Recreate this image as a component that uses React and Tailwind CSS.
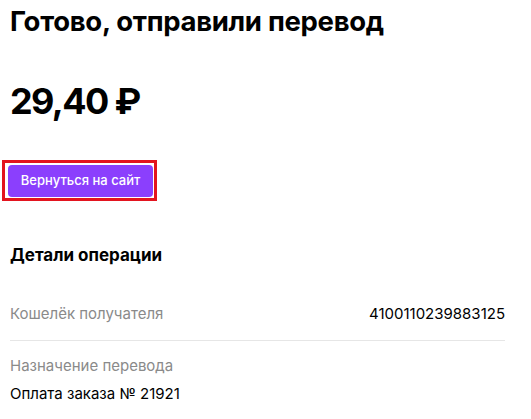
import React from 'react';

const details = [
  { label: 'Кошелёк получателя', value: '4100110239883125', inline: true },
  { label: 'Назначение перевода', value: 'Оплата заказа № 21921', inline: false },
];

const App = () => {
  return (
    <div className="min-h-screen bg-white text-black pl-[10px] pr-[26px] font-['Inter',sans-serif]">
      <h1 className="pt-[2px] text-[27.5px] leading-[38px] font-bold tracking-[-0.3px]">Готово, отправили перевод</h1>

      <div className="mt-[38px] text-[36px] leading-[46px] font-bold tracking-[-1.6px]">29,40 ₽</div>

      <div className="mt-[36px] -ml-[8px] inline-block border-[3px] border-[#e3141f] pt-[2px] pl-[3px] pr-[1px] pb-[1px]">
        <button className="h-[32px] w-[145px] rounded-[4px] bg-[#8b3ffd] text-white text-[13px] font-medium">
          Вернуться на сайт
        </button>
      </div>

      <h2 className="mt-[42px] text-[17px] leading-[24px] font-bold">Детали операции</h2>

      <div className="mt-[36px]">
        {details.map((d, idx) =>
          d.inline ? (
            <div key={idx} className="flex items-center justify-between pb-[15px] border-b border-[#e6e6e6] text-[15px] leading-[22px]">
              <span className="text-[#8a8a8a]">{d.label}</span>
              <span className="text-black">{d.value}</span>
            </div>
          ) : (
            <div key={idx} className="pt-[14px] text-[15px] leading-[22px]">
              <div className="text-[#8a8a8a]">{d.label}</div>
              <div className="mt-[6px] text-black">{d.value}</div>
            </div>
          )
        )}
      </div>
    </div>
  );
};

export default App;
